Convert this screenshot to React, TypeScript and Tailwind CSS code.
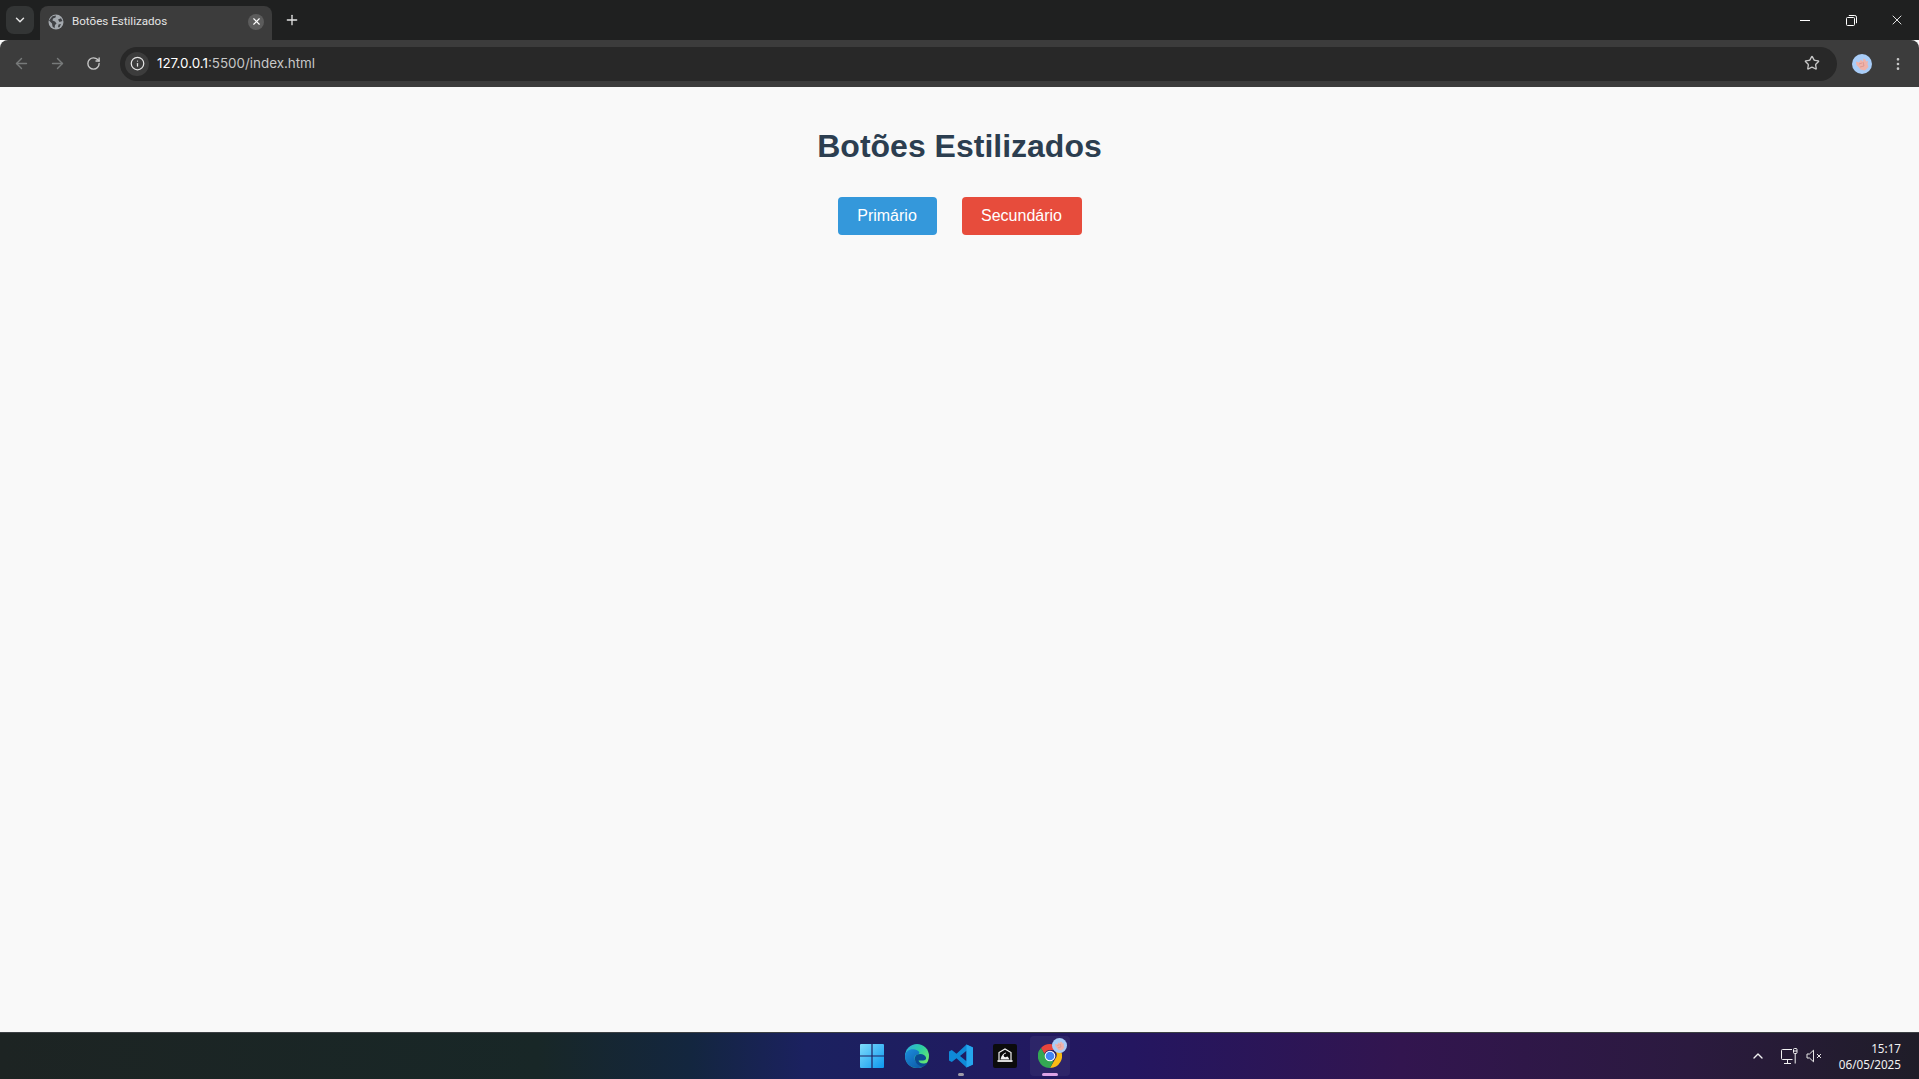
import { ChevronDown, X, Plus, ArrowLeft, ArrowRight, RotateCw, Info, Star, ChevronUp, EllipsisVertical } from "lucide-react";

const ui = "font-['Roboto','Noto_Sans',sans-serif]";

function Globe() {
  return (
    <svg width="16" height="16" viewBox="0 0 16 16">
      <circle cx="8" cy="8" r="7.5" fill="#a4a9ae" />
      <path d="M1 6.5L4.5 2.2 8 1.5 7.5 3.5 5 4.5 4.5 6.5 7 7.5 8.5 9.5 7 11 6.5 14.3 4.5 12.5 4 9.5z" fill="#3f4144" />
      <path d="M10 5.5L13 4.2 14.5 7 11.5 8zM10.5 10.5L13 10 11.5 13.2 10 13.2z" fill="#3f4144" />
    </svg>
  );
}

function Restore() {
  return (
    <svg width="11" height="11" viewBox="0 0 11 11" fill="none" stroke="#fff" strokeWidth="1">
      <rect x="0.5" y="2.5" width="8" height="8" rx="1" />
      <path d="M2.8 0.5h6a1.7 1.7 0 0 1 1.7 1.7v6" />
    </svg>
  );
}

function Avatar({ size }: { size: number }) {
  return (
    <svg width={size} height={size} viewBox="0 0 20 20">
      <circle cx="10" cy="10" r="10" fill="#a9cdf8" />
      <path d="M4 7.5l3 1 2-3 1.5 2 1-3 2 1 .5 2 2-.5-.5 3 1 3-2.500 2.500-1.500 1-4-1-2.500-3-1.500-1.500z" fill="#efb3aa" />
      <path d="M7 10l3-1M11 8l1 4M8 13l4-1" stroke="#d58f88" strokeWidth="0.7" fill="none" />
    </svg>
  );
}

function WindowsLogo() {
  return (
    <svg width="24" height="24" viewBox="0 0 24 24">
      <defs>
        <linearGradient id="win" x1="0" y1="0" x2="1" y2="1">
          <stop offset="0" stopColor="#7fdcfb" />
          <stop offset="1" stopColor="#0c98ef" />
        </linearGradient>
      </defs>
      <path fill="url(#win)" d="M0 1a1 1 0 0 1 1-1h10.400v11.400H0zM12.600 0H23a1 1 0 0 1 1 1v10.400H12.600zM0 12.600h11.400V24H1a1 1 0 0 1-1-1zM12.600 12.600H24V23a1 1 0 0 1-1 1H12.600z" />
    </svg>
  );
}

function EdgeLogo() {
  return (
    <svg width="24" height="24" viewBox="0 0 24 24">
      <defs>
        <linearGradient id="edgeA" x1="0" y1="0" x2="1" y2="0.7">
          <stop offset="0" stopColor="#2fa8e8" />
          <stop offset="0.55" stopColor="#2dcfa0" />
          <stop offset="1" stopColor="#6ee86a" />
        </linearGradient>
        <linearGradient id="edgeB" x1="0" y1="0" x2="0.8" y2="1">
          <stop offset="0" stopColor="#1c8ddd" />
          <stop offset="1" stopColor="#0d5ba8" />
        </linearGradient>
      </defs>
      <circle cx="12" cy="12" r="12" fill="url(#edgeA)" />
      <path d="M0 12C0.500 7 5 4.500 10 5.500 15 6.500 16 10 11.500 11 9 12 9 15 11 18 13 21 17 23 19 22 17 23.500 14.500 24 12 24 5 24 0 19 0 12z" fill="url(#edgeB)" />
      <path d="M11.500 11C15 9 20 10 21 13.500 21.500 15.500 20 16.500 18 16.500H13.500C14 18.500 16.500 20 19.500 19.500 20.800 19.300 22 18.800 23 18 21.500 21 19.500 22.500 17 22.700 13.500 22 10.500 19 10 16 9.500 14 10 12 11.500 11z" fill="#0b4a92" />
    </svg>
  );
}

function VSCodeLogo() {
  return (
    <svg width="24" height="24" viewBox="0 0 24 24">
      <path d="M17.500 0.500L24 3.500V20.500L17.500 23.500L7.500 14.300 2.800 18 0 16.500V7.500L2.800 6 7.500 9.700zM17.500 6.800L11 12l6.500 5.200z" fill="#0f8ad8" />
      <path d="M17.500 0.500L24 3.500V20.500L17.500 23.500V17.200L17.500 6.800z" fill="#25a6ee" />
    </svg>
  );
}

function BlackApp() {
  return (
    <div className="flex h-6 w-6 items-center justify-center rounded-[2px] bg-[#0b0b0c]">
      <svg width="20" height="20" viewBox="0 0 20 20" fill="none" stroke="#f1f1f1" strokeWidth="1.200">
        <path d="M4 14V6.500L10 3l6 3.500V14" />
        <path d="M5.500 13.500C6.500 9 9 7 11 6.500c-1 2 0 3.500 2 4.500l1.500 2.500z" fill="#f1f1f1" stroke="none" />
        <circle cx="10.500" cy="9.500" r="1.800" fill="#0b0b0c" stroke="none" />
        <path d="M2.500 15h15" strokeWidth="1.800" />
      </svg>
    </div>
  );
}

function ChromeLogo() {
  return (
    <svg width="24" height="24" viewBox="0 0 24 24">
      <path d="M12 0a12 12 0 0 1 10.400 6H12a6 6 0 0 0-5.600 3.800L3 3.900A12 12 0 0 1 12 0z" fill="#e8453c" />
      <path d="M22.400 6A12 12 0 0 1 12 24l5.200-9a6 6 0 0 0-1-9z" fill="#f9bc15" />
      <path d="M12 24A12 12 0 0 1 3 3.900L8.200 13a6 6 0 0 0 7.500 3.700z" fill="#34a853" />
      <circle cx="12" cy="12" r="5.300" fill="#fff" />
      <circle cx="12" cy="12" r="4.300" fill="#4285f4" />
    </svg>
  );
}

function NetworkIcon() {
  return (
    <svg width="17" height="17" viewBox="0 0 17 17" fill="none" stroke="#f2f2f2" strokeWidth="1">
      <path d="M11 1.500H1.500a1 1 0 0 0-1 1v8a1 1 0 0 0 1 1h10" />
      <path d="M6.500 11.500v3.500M3 15.500h7" />
      <rect x="12.500" y="0.500" width="3.500" height="5" rx="1" />
      <path d="M12.500 3h3.500M14.200 5.500v10" />
    </svg>
  );
}

function MutedIcon() {
  return (
    <svg width="17" height="14" viewBox="0 0 17 14" fill="none" stroke="#e8e8e8" strokeWidth="1">
      <path d="M1 5h2.500L7.500 1.200v11.600L3.500 9H1z" />
      <path d="M11 5l4 4M15 5l-4 4" />
    </svg>
  );
}

export default function App() {
  return (
    <div className={`flex h-[1079px] w-full flex-col overflow-hidden bg-[#f9f9f9] ${ui}`}>
      <header className="flex h-10 shrink-0 items-end bg-[#1f2020] pl-[6px]">
        <div className="mb-[6px] flex h-7 w-7 items-center justify-center rounded-lg bg-[#333535] text-[#e3e3e3]">
          <ChevronDown size={14} strokeWidth={2.500} />
        </div>
        <div className="ml-[6px] flex h-[34px] w-[232px] items-center rounded-t-lg bg-[#3c3c3c] pb-[3px] pl-[8px] pr-2">
          <Globe />
          <span className="ml-[8px] flex-1 text-[11.6px] text-[#e3e3e3]">Botões Estilizados</span>
          <div className="flex h-4 w-4 items-center justify-center rounded-full bg-[#5c5c5c] text-white">
            <X size={11} strokeWidth={2.500} />
          </div>
        </div>
        <div className="mb-[8px] ml-[8px] flex h-6 w-6 items-center justify-center text-[#e3e3e3]">
          <Plus size={16} strokeWidth={2} />
        </div>
        <div className="mb-[6px] ml-auto flex h-7 items-center">
          <div className="flex w-[46px] justify-center"><div className="h-px w-[10px] bg-white" /></div>
          <div className="flex w-[46px] justify-center"><Restore /></div>
          <div className="-mr-px flex w-[46px] justify-center text-white"><X size={16} strokeWidth={1.300} /></div>
        </div>
      </header>

      <nav className="flex h-[47px] shrink-0 items-center rounded-t-lg bg-[#3c3c3c] pl-[13px] pr-[9px]">
        <div className="flex w-[36px] text-[#777a7a]"><ArrowLeft size={17} /></div>
        <div className="flex w-[37px] text-[#777a7a]"><ArrowRight size={17} /></div>
        <div className="flex w-[34px] text-[#c7c7c7]"><RotateCw size={15} strokeWidth={2.200} /></div>
        <div className="flex h-[34px] flex-1 items-center rounded-full bg-[#282828] pl-[5px] pr-[17px]">
          <div className="flex h-6 w-6 items-center justify-center rounded-full bg-[#3c3c3c] text-[#e3e3e3]">
            <Info size={15} />
          </div>
          <span className="ml-[8px] flex-1 font-['Inter',sans-serif] text-[13.4px] leading-none text-[#c7c7c7]">
            <span className="text-white">127.0.0.1</span>:5500/index.html
          </span>
          <Star size={16} className="mb-px text-[#c7c7c7]" />
        </div>
        <div className="ml-[15px]"><Avatar size={20} /></div>
        <div className="ml-[14px] flex w-[24px] justify-center text-[#c7c7c7]"><EllipsisVertical size={16} /></div>
      </nav>

      <main className="flex flex-1 flex-col items-center font-['Liberation_Sans',sans-serif]">
        <h1 className="mt-[41px] text-[32px] leading-[37px] font-bold text-[#2c3e50]">Botões Estilizados</h1>
        <div className="mt-[32px] flex gap-[25px]">
          <button className="h-[38px] w-[99px] rounded-[4px] bg-[#3498db] text-base text-white">Primário</button>
          <button className="h-[38px] w-[120px] rounded-[4px] bg-[#e74c3c] text-base text-white">Secundário</button>
        </div>
      </main>

      <footer className="flex h-[47px] shrink-0 items-center border-t border-t-[#3c4044] bg-[linear-gradient(90deg,#1d2423_0%,#182727_28%,#13263f_36%,#1b2160_42%,#241660_59%,#32154f_73%,#2b1a3f_88%,#1f1d28_100%)] pl-[850px] pr-[18px]">
        <div className="flex h-10 items-center">
          <div className="flex w-[44px] justify-center"><WindowsLogo /></div>
          <div className="flex w-[45px] justify-center"><EdgeLogo /></div>
          <div className="relative flex h-10 w-[44px] items-center justify-center">
            <VSCodeLogo />
            <div className="absolute bottom-0 h-[3px] w-[6px] rounded-full bg-[#9e9aa8]" />
          </div>
          <div className="flex w-[44px] justify-center"><BlackApp /></div>
          <div className="relative ml-[3px] flex h-10 w-[40px] items-center justify-center rounded bg-white/5">
            <ChromeLogo />
            <div className="absolute right-[3px] top-[2px]"><Avatar size={15} /></div>
            <div className="absolute bottom-0 h-[3px] w-[16px] rounded-full bg-[#dca3e6]" />
          </div>
        </div>
        <div className="ml-auto flex items-center text-[#f2f2f2]">
          <ChevronUp size={16} strokeWidth={2} />
          <div className="ml-[15px]"><NetworkIcon /></div>
          <div className="ml-[8px]"><MutedIcon /></div>
          <div className="ml-[13px] w-[65px] text-right font-['Noto_Sans',sans-serif] text-[11.7px] leading-[16px]">
            <div>15:17</div>
            <div>06/05/2025</div>
          </div>
        </div>
      </footer>
    </div>
  );
}
